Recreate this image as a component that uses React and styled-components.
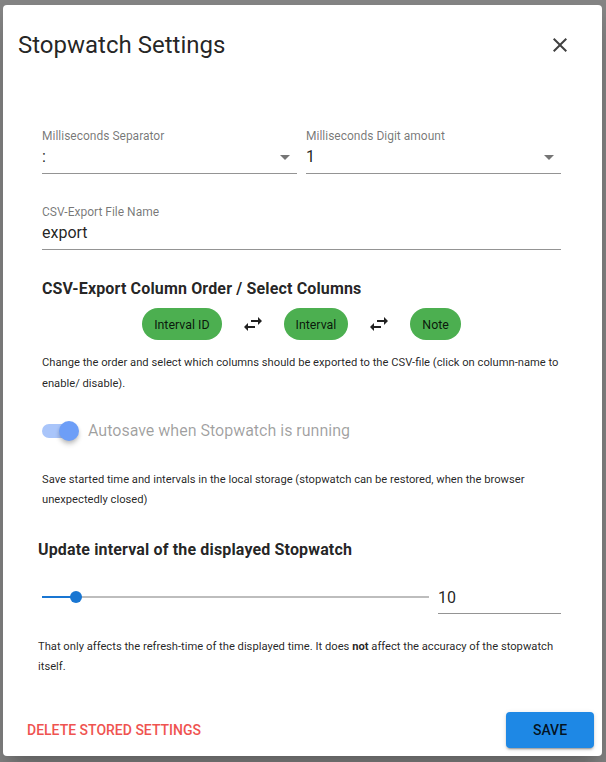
import React from 'react';
import styled, { createGlobalStyle } from 'styled-components';

const GlobalStyle = createGlobalStyle`
  html, body {
    margin: 0;
    padding: 0;
    background: #858585;
  }
  body {
    font-family: Roboto, "Liberation Sans", Arial, sans-serif;
  }
`;

const Backdrop = styled.div`
  width: 606px;
  height: 762px;
  box-sizing: border-box;
  padding: 5px 4px 6px 3px;
  background: #858585;
`;

const Dialog = styled.div`
  height: 100%;
  background: #fff;
  border-radius: 4px;
  box-shadow: 0 11px 15px -7px rgba(0, 0, 0, 0.2), 0 24px 38px 3px rgba(0, 0, 0, 0.14);
  display: flex;
  flex-direction: column;
  box-sizing: border-box;
`;

const Header = styled.div`
  display: flex;
  align-items: center;
  justify-content: space-between;
  padding: 24px 30px 0 15px;
`;

const Title = styled.h2`
  margin: 0;
  font-size: 24px;
  line-height: 32px;
  font-weight: 400;
  color: rgba(0, 0, 0, 0.87);
`;

const IconButton = styled.button`
  border: 0;
  background: none;
  padding: 0;
  width: 24px;
  height: 24px;
  color: rgba(0, 0, 0, 0.75);
  cursor: pointer;
  svg {
    display: block;
  }
`;

const Body = styled.div`
  padding: 67px 41px 0 39px;
  display: flex;
  flex-direction: column;
`;

const FieldRow = styled.div`
  display: flex;
  gap: 9px;
`;

const Field = styled.div`
  flex: ${(p) => (p.$width ? `0 0 ${p.$width}px` : '1 1 0')};
  margin-top: ${(p) => p.$top || 0}px;
  display: flex;
  flex-direction: column;
`;

const Label = styled.div`
  font-size: 12px;
  line-height: 16px;
  color: rgba(0, 0, 0, 0.55);
`;

const Value = styled.div`
  display: flex;
  align-items: center;
  justify-content: space-between;
  font-size: 16px;
  line-height: 24px;
  padding-top: 1px;
  padding-bottom: ${(p) => p.$pb ?? 4}px;
  color: rgba(0, 0, 0, 0.87);
  border-bottom: 1px solid rgba(0, 0, 0, 0.42);
`;

const Caret = styled.span`
  width: 0;
  height: 0;
  margin-right: 7px;
  border-left: 5px solid transparent;
  border-right: 5px solid transparent;
  border-top: 5px solid rgba(0, 0, 0, 0.54);
`;

const Heading = styled.h3`
  margin: ${(p) => p.$top}px 0 0 ${(p) => p.$left || 0}px;
  font-size: 16px;
  line-height: 24px;
  font-weight: 700;
  letter-spacing: 0.15px;
  color: rgba(0, 0, 0, 0.87);
`;

const ChipRow = styled.div`
  margin-top: 7px;
  display: flex;
  justify-content: center;
  align-items: center;
  gap: 19px;
  color: rgba(0, 0, 0, 0.87);
`;

const Chip = styled.span`
  height: 32px;
  display: inline-flex;
  align-items: center;
  padding: 0 12px;
  border-radius: 16px;
  background: #4caf50;
  font-size: 12.4px;
  color: rgba(0, 0, 0, 0.87);
  cursor: pointer;
`;

const Hint = styled.p`
  margin: ${(p) => p.$top}px 0 0 ${(p) => p.$left || 0}px;
  font-size: 11.2px;
  line-height: ${(p) => p.$lh || 20}px;
  color: rgba(0, 0, 0, 0.87);
`;

const SwitchRow = styled.label`
  margin-top: 25px;
  display: flex;
  align-items: center;
  gap: 10px;
  font-size: 16px;
  line-height: 24px;
  color: rgba(0, 0, 0, 0.38);
`;

const SwitchTrack = styled.span`
  position: relative;
  width: 36px;
  height: 14px;
  border-radius: 8px;
  background: #a9c5fa;
`;

const SwitchThumb = styled.span`
  position: absolute;
  top: -3px;
  right: -1px;
  width: 20px;
  height: 20px;
  border-radius: 50%;
  background: #6d9ef7;
  box-shadow: 0 2px 4px -1px rgba(0, 0, 0, 0.2), 0 4px 5px 0 rgba(0, 0, 0, 0.14);
`;

const SliderRow = styled.div`
  margin-top: 23px;
  display: flex;
  align-items: flex-end;
  gap: 9px;
`;

const SliderTrack = styled.div`
  position: relative;
  flex: 1;
  margin-left: 4px;
  align-self: flex-start;
  margin-top: 11px;
  height: 2px;
  background: #bdbdbd;
`;

const SliderFill = styled.div`
  height: 2px;
  background: #1976d2;
`;

const SliderThumb = styled.span`
  position: absolute;
  top: -5px;
  width: 12px;
  height: 12px;
  margin-left: -6px;
  border-radius: 50%;
  background: #1976d2;
`;

const LastSection = styled.div`
  margin-left: -4px;
  display: flex;
  flex-direction: column;
`;

const Footer = styled.div`
  margin-top: auto;
  padding: 8px;
  display: flex;
  align-items: center;
  justify-content: space-between;
`;

const Button = styled.button`
  height: 36px;
  padding: 0 16px;
  border: 0;
  border-radius: 4px;
  font-family: inherit;
  font-size: 14px;
  font-weight: 500;
  text-transform: uppercase;
  cursor: pointer;
  color: ${(p) => (p.$primary ? 'rgba(0, 0, 0, 0.87)' : '#ef5350')};
  background: ${(p) => (p.$primary ? '#1e88e5' : 'transparent')};
  min-width: ${(p) => (p.$primary ? '88px' : '0')};
  box-shadow: ${(p) =>
    p.$primary
      ? '0 3px 1px -2px rgba(0,0,0,.2), 0 2px 2px 0 rgba(0,0,0,.14), 0 1px 5px 0 rgba(0,0,0,.12)'
      : 'none'};
`;

const CloseIcon = () => (
  <svg width="24" height="24" viewBox="0 0 24 24" fill="currentColor">
    <path d="M19,6.41L17.59,5L12,10.59L6.41,5L5,6.41L10.59,12L5,17.59L6.41,19L12,13.41L17.59,19L19,17.59L13.41,12L19,6.41Z" />
  </svg>
);

const SwapIcon = () => (
  <svg width="24" height="24" viewBox="0 0 24 24" fill="currentColor">
    <path d="M6.99 11L3 15l3.99 4v-3H14v-2H6.99v-3zM21 9l-3.99-4v3H10v2h7.01v3L21 9z" />
  </svg>
);

const columns = ['Interval ID', 'Interval', 'Note'];
const interval = 10;
const sliderMax = 100;

export default function App() {
  return (
    <Backdrop>
      <GlobalStyle />
      <Dialog>
        <Header>
          <Title>Stopwatch Settings</Title>
          <IconButton aria-label="close">
            <CloseIcon />
          </IconButton>
        </Header>

        <Body>
          <FieldRow>
            <Field>
              <Label>Milliseconds Separator</Label>
              <Value>
                <span>:</span>
                <Caret />
              </Value>
            </Field>
            <Field>
              <Label>Milliseconds Digit amount</Label>
              <Value>
                <span>1</span>
                <Caret />
              </Value>
            </Field>
          </FieldRow>

          <Field $top={30}>
            <Label>CSV-Export File Name</Label>
            <Value>export</Value>
          </Field>

          <Heading $top={27}>CSV-Export Column Order / Select Columns</Heading>
          <ChipRow>
            {columns.map((c, i) => (
              <React.Fragment key={c}>
                {i > 0 && <SwapIcon />}
                <Chip>{c}</Chip>
              </React.Fragment>
            ))}
          </ChipRow>
          <Hint $top={12} $lh={21}>
            Change the order and select which columns should be exported to the CSV-file (click on column-name to
            enable/ disable).
          </Hint>

          <SwitchRow>
            <SwitchTrack>
              <SwitchThumb />
            </SwitchTrack>
            Autosave when Stopwatch is running
          </SwitchRow>
          <Hint $top={27}>
            Save started time and intervals in the local storage (stopwatch can be restored, when the browser
            unexpectedly closed)
          </Hint>

          <LastSection>
            <Heading $top={28}>Update interval of the displayed Stopwatch</Heading>
            <SliderRow>
              <SliderTrack>
                <SliderFill style={{ width: `${(interval / sliderMax) * 88}%` }} />
                <SliderThumb style={{ left: `${(interval / sliderMax) * 88}%` }} />
              </SliderTrack>
              <Field $width={123}>
                <Value $pb={3}>{interval}</Value>
              </Field>
            </SliderRow>
            <Hint $top={23}>
              That only affects the refresh-time of the displayed time. It does <b>not</b> affect the accuracy of the
              stopwatch itself.
            </Hint>
          </LastSection>
        </Body>

        <Footer>
          <Button>Delete stored settings</Button>
          <Button $primary>Save</Button>
        </Footer>
      </Dialog>
    </Backdrop>
  );
}
